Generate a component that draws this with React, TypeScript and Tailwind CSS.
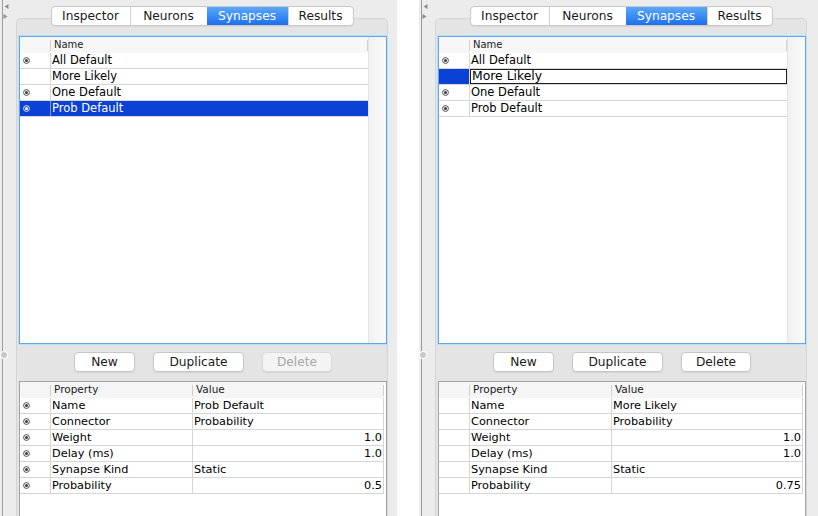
import React from "react";

const tabs = [
  { label: "Inspector", w: "w-[78px]" },
  { label: "Neurons", w: "w-[77px]" },
  { label: "Synapses", w: "w-[81px]" },
  { label: "Results", w: "w-[65px]" },
];

const listRows = ["All Default", "More Likely", "One Default", "Prob Default"];

interface Prop {
  name: string;
  value: string;
  right?: boolean;
}

function Radio({ light }: { light?: boolean }) {
  return (
    <svg width="7" height="7" viewBox="0 0 7 7" className={light ? "text-white" : "text-[#3a3a3a]"}>
      <circle cx="3.5" cy="3.5" r="2.9" fill="none" stroke="currentColor" strokeWidth="0.9" />
      <circle cx="3.5" cy="3.5" r="1.5" fill="currentColor" />
    </svg>
  );
}

function Tabs() {
  return (
    <div className="h-[26px] flex justify-center items-end relative z-10">
      <div className="flex h-[20px] rounded-[4px] border border-[#c9c9c9] bg-white overflow-hidden shadow-[0_1px_1px_rgba(0,0,0,0.06)]">
        {tabs.map((t, i) => {
          const active = t.label === "Synapses";
          return (
            <div
              key={t.label}
              className={`${t.w} flex items-center justify-center text-[12.2px] leading-none ${
                i > 0 && !active ? "border-l border-[#d2d2d2]" : ""
              } ${active ? "bg-gradient-to-b from-[#5aa7fb] to-[#1c6ff0] text-white" : "text-[#1a1a1a]"}`}
            >
              {t.label}
            </div>
          );
        })}
      </div>
    </div>
  );
}

function ListTable({ mode }: { mode: "select" | "edit" }) {
  return (
    <div className="h-[308px] border border-[#5fa6ec] shadow-[0_0_0_1px_#c3dcf5] bg-white flex">
      <div className="w-[348px] flex flex-col">
        <div className="h-[16px] flex bg-[#f7f7f7] text-[10px] text-[#222] leading-[15px]">
          <div className="w-[31px] flex items-center justify-end">
            <div className="w-px h-[11px] bg-[#d0d0d0]" />
          </div>
          <div className="flex-1 pl-[3px]">Name</div>
          <div className="w-px h-[11px] mt-[3px] bg-[#d0d0d0]" />
        </div>
        {listRows.map((r) => {
          const sel = mode === "select" && r === "Prob Default";
          const edit = mode === "edit" && r === "More Likely";
          const radio = r !== "More Likely";
          return (
            <div key={r} className="h-[16px] flex border-b border-[#d6d6d6] text-[11.5px] leading-[15px]">
              <div
                className={`w-[31px] flex items-center pl-[3px] border-r ${
                  sel ? "bg-[#0b41d4] border-[#7d96e6]" : edit ? "bg-[#0b41d4] border-[#d6d6d6]" : "border-[#d6d6d6]"
                }`}
              >
                {radio && <Radio light={sel} />}
              </div>
              {edit ? (
                <div className="flex-1 border-[1.5px] border-[#1e1e1e] bg-white text-[12.4px] leading-[12px] pl-[1px] text-black">
                  {r}
                </div>
              ) : (
                <div className={`flex-1 pl-[1px] ${sel ? "bg-[#0b41d4] text-white" : "text-black"}`}>{r}</div>
              )}
            </div>
          );
        })}
      </div>
      <div className="flex-1 border-l border-[#e4e4e4] bg-gradient-to-r from-[#f1f1f1] to-[#fafafa]" />
    </div>
  );
}

function Buttons({ deleteEnabled }: { deleteEnabled: boolean }) {
  const base =
    "h-[20px] rounded-[4px] border flex items-center justify-center text-[12.2px] leading-none shadow-[0_1px_1px_rgba(0,0,0,0.07)]";
  return (
    <div className="mt-[8px] flex justify-center gap-[18px]">
      <div className={`${base} w-[61px] bg-white border-[#c6c6c6] text-[#1a1a1a]`}>New</div>
      <div className={`${base} w-[91px] bg-white border-[#c6c6c6] text-[#1a1a1a]`}>Duplicate</div>
      <div
        className={`${base} w-[70px] ${
          deleteEnabled ? "bg-white border-[#c6c6c6] text-[#1a1a1a]" : "bg-[#f4f4f4] border-[#dadada] text-[#a8a8a8]"
        }`}
      >
        Delete
      </div>
    </div>
  );
}

function PropertyTable({ props, radios }: { props: Prop[]; radios: boolean }) {
  return (
    <div className="mt-[9px] flex-1 border border-[#a3a3a3] bg-white">
      <div className="w-[364px] flex flex-col">
        <div className="h-[16px] flex bg-[#f5f5f5] text-[10.5px] text-[#222] leading-[15px]">
          <div className="w-[31px] flex items-center justify-end">
            <div className="w-px h-[11px] bg-[#d0d0d0]" />
          </div>
          <div className="w-[142px] pl-[3px] flex justify-between">
            <span>Property</span>
            <div className="w-px h-[11px] mt-[3px] bg-[#d0d0d0]" />
          </div>
          <div className="flex-1 pl-[3px] flex justify-between">
            <span>Value</span>
            <div className="w-px h-[11px] mt-[3px] bg-[#d0d0d0]" />
          </div>
        </div>
        {props.map((p) => (
          <div key={p.name} className="h-[16px] flex border-b border-[#d6d6d6] text-[11.3px] leading-[15px] text-black">
            <div className="w-[31px] flex items-center pl-[3px] border-r border-[#d6d6d6]">{radios && <Radio />}</div>
            <div className="w-[142px] pl-[1px] border-r border-[#d6d6d6]">{p.name}</div>
            <div className={`flex-1 border-r border-[#d6d6d6] ${p.right ? "text-right pr-[1px]" : "pl-[1px]"}`}>
              {p.value}
            </div>
          </div>
        ))}
      </div>
    </div>
  );
}

function Panel({
  mode,
  props,
  radios,
  width,
}: {
  mode: "select" | "edit";
  props: Prop[];
  radios: boolean;
  width: string;
}) {
  return (
    <div className={`${width} h-[540px] flex bg-[#ececec]`}>
      {/* split pane divider */}
      <div className="w-[16px] flex">
        <div className="ml-[2px] border-l border-[#9c9c9c] flex flex-col">
          <svg width="5" height="5" viewBox="0 0 5 5" className="mt-[4px] ml-[1px]">
            <path d="M4.5 0 L0.5 2.5 L4.5 5 Z" fill="#8e8e8e" />
          </svg>
          <svg width="5" height="5" viewBox="0 0 5 5" className="mt-[5px]">
            <path d="M0.5 0 L4.5 2.5 L0.5 5 Z" fill="#8e8e8e" />
          </svg>
          <div className="mt-[333px] -ml-[2px] w-[6px] h-[6px] rounded-full bg-[#c8c8c8] ring-1 ring-white" />
        </div>
      </div>

      <div className="w-[372px] flex flex-col">
        <Tabs />
        <div className="-mt-[8px] flex-1 flex flex-col bg-[#e4e4e4] border border-[#d5d5d5] rounded-t-[5px] pt-[17px] pl-[2px]">
          <ListTable mode={mode} />
          <Buttons deleteEnabled={mode === "edit"} />
          <PropertyTable props={props} radios={radios} />
        </div>
      </div>
      <div className="flex-1" />
    </div>
  );
}

export default function App() {
  const leftProps: Prop[] = [
    { name: "Name", value: "Prob Default" },
    { name: "Connector", value: "Probability" },
    { name: "Weight", value: "1.0", right: true },
    { name: "Delay (ms)", value: "1.0", right: true },
    { name: "Synapse Kind", value: "Static" },
    { name: "Probability", value: "0.5", right: true },
  ];
  const rightProps: Prop[] = [
    { name: "Name", value: "More Likely" },
    { name: "Connector", value: "Probability" },
    { name: "Weight", value: "1.0", right: true },
    { name: "Delay (ms)", value: "1.0", right: true },
    { name: "Synapse Kind", value: "Static" },
    { name: "Probability", value: "0.75", right: true },
  ];

  return (
    <div className="w-[818px] h-[516px] overflow-hidden bg-white flex font-['DejaVu_Sans',sans-serif]">
      <Panel mode="select" props={leftProps} radios width="w-[397px]" />
      <div className="w-[22px] bg-white" />
      <Panel mode="edit" props={rightProps} radios={false} width="w-[399px]" />
    </div>
  );
}
